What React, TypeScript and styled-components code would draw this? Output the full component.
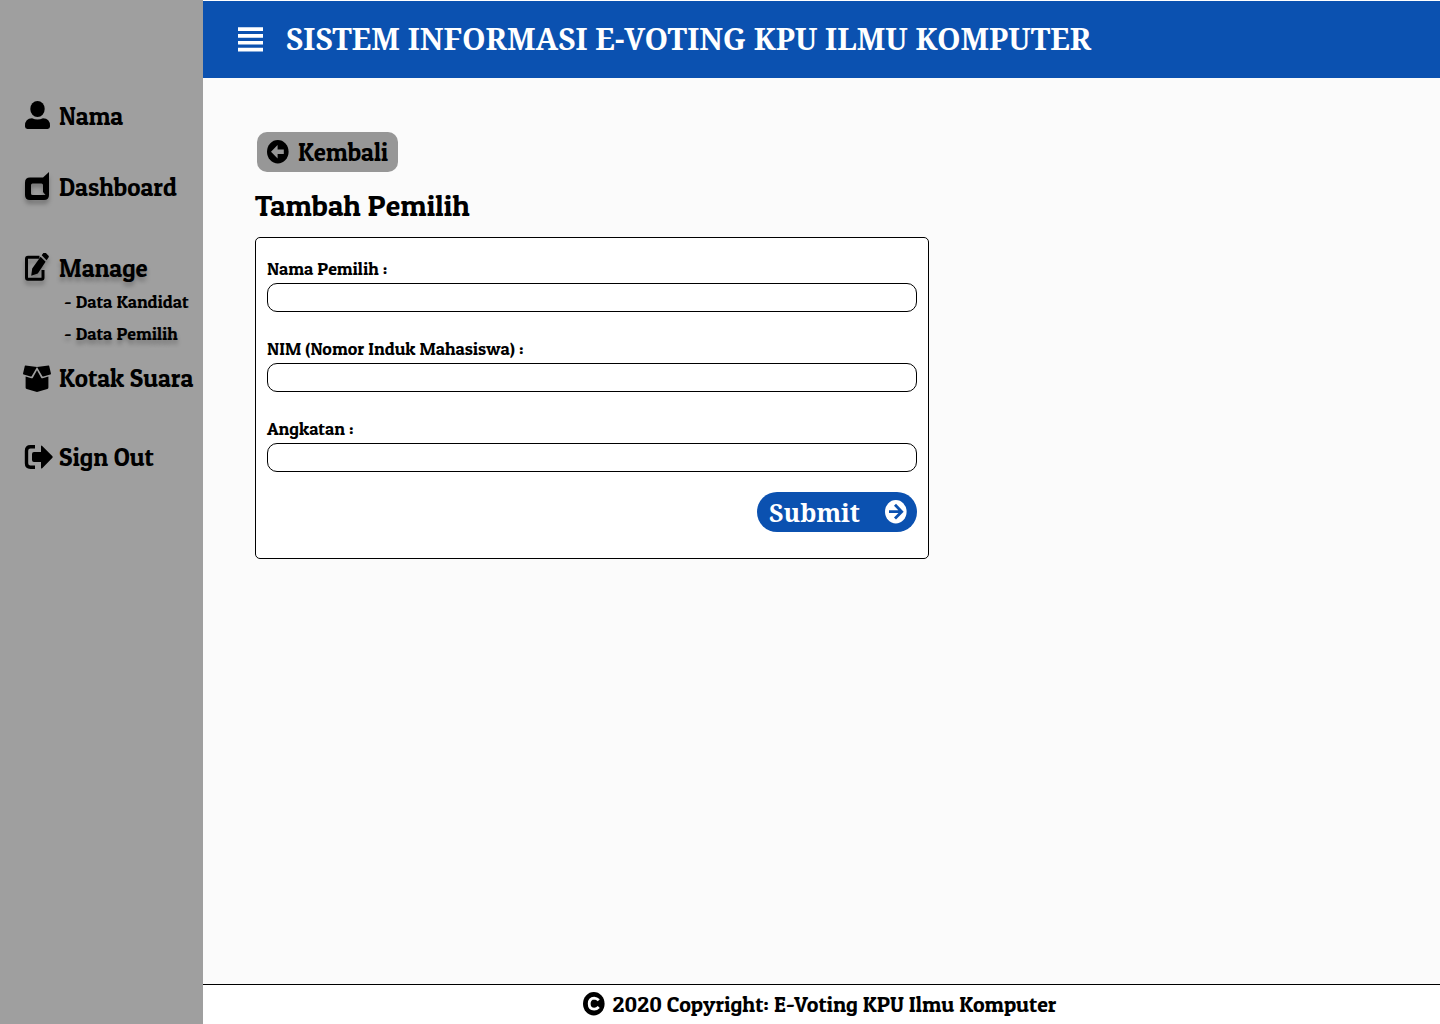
import React from "react";
import styled, { createGlobalStyle } from "styled-components";

const slab = '"Patua One", "DejaVu Serif Condensed", "DejaVu Serif", serif';
const serif = '"Noto Serif", "Droid Serif", "DejaVu Serif", serif';
const blue = "#0b51b0";

const GlobalStyle = createGlobalStyle`
  *, *::before, *::after { box-sizing: border-box; }
  body { margin: 0; background: #fbfbfb; color: #000; font-family: ${slab}; }
  h1, h2, ul { margin: 0; padding: 0; }
  ul { list-style: none; }
  svg { display: block; flex: none; }
`;

const Page = styled.div`
  display: grid;
  grid-template-columns: 203px minmax(0, 1fr);
  min-height: 100vh;
`;

const Sidebar = styled.nav`
  background: #9f9f9f;
  padding: 98px 0 32px 23px;
`;

const NavItem = styled.li<{ $gap: number }>`
  margin-top: ${(p) => p.$gap}px;
`;

const NavLink = styled.a<{ $shadow?: boolean; $iconShadow?: boolean }>`
  display: grid;
  grid-template-columns: 28px 1fr;
  align-items: center;
  column-gap: 8px;
  height: 36px;
  color: inherit;
  font-size: 25px;
  text-decoration: none;
  white-space: nowrap;
  text-shadow: ${(p) => (p.$shadow ? "0 4px 4px rgba(0, 0, 0, 0.25)" : "none")};

  svg {
    filter: ${(p) => (p.$iconShadow ? "drop-shadow(0 4px 2px rgba(0, 0, 0, 0.25))" : "none")};
  }
`;

const SubLink = styled.a<{ $shadow?: boolean }>`
  display: block;
  padding-left: 41px;
  color: inherit;
  font-size: 18px;
  line-height: 32px;
  text-decoration: none;
  white-space: nowrap;
  text-shadow: ${(p) => (p.$shadow ? "0 4px 4px rgba(0, 0, 0, 0.25)" : "none")};
`;

const Column = styled.div`
  display: flex;
  flex-direction: column;
`;

const Header = styled.header`
  display: flex;
  align-items: center;
  gap: 23px;
  min-height: 78px;
  padding: 0 35px;
  border-top: 1px solid #fff;
  background: ${blue};
  color: #fff;
`;

const MenuButton = styled.button`
  padding: 0;
  border: 0;
  background: none;
  color: inherit;
  cursor: pointer;
`;

const SiteTitle = styled.h1`
  padding-bottom: 2px;
  font-family: ${serif};
  font-size: 30px;
  font-weight: 700;
  line-height: 40px;
`;

const Content = styled.main`
  display: flex;
  flex: 1;
  flex-direction: column;
  align-items: flex-start;
  padding: 54px 52px;
`;

const BackButton = styled.button`
  display: flex;
  align-items: center;
  gap: 9px;
  height: 40px;
  margin-left: 2px;
  padding: 0 10px;
  border: 0;
  border-radius: 10px;
  background: #979797;
  color: #000;
  font-family: ${slab};
  font-size: 25px;
  cursor: pointer;
`;

const Heading = styled.h2`
  margin: 13px 0 12px;
  font-size: 30px;
  font-weight: 400;
  line-height: 40px;
`;

const Card = styled.form`
  display: flex;
  flex-direction: column;
  gap: 23px;
  width: 100%;
  max-width: 674px;
  padding: 17px 11px 26px;
  border: 1px solid #000;
  border-radius: 5px;
  background: #fff;
`;

const Field = styled.div`
  display: flex;
  flex-direction: column;
`;

const Label = styled.label`
  font-size: 18px;
  line-height: 28px;
`;

const Input = styled.input`
  width: 100%;
  height: 29px;
  padding: 0 10px;
  border: 1px solid #000;
  border-radius: 10px;
  background: #fff;
  font-family: ${slab};
  font-size: 18px;
`;

const SubmitButton = styled.button`
  display: flex;
  align-items: center;
  align-self: flex-end;
  justify-content: space-between;
  width: 160px;
  height: 40px;
  margin-top: -3px;
  padding: 0 10px 0 12px;
  border: 0;
  border-radius: 20px;
  background: ${blue};
  color: #fff;
  font-family: ${serif};
  font-size: 25px;
  font-weight: 700;
  cursor: pointer;
`;

const Footer = styled.footer`
  display: flex;
  align-items: center;
  justify-content: center;
  gap: 8px;
  min-height: 40px;
  padding: 0 4px 1px 0;
  border-top: 1px solid #000;
  background: #fff;
  font-size: 22px;
`;

const UserIcon = () => (
  <svg width="28" height="30" viewBox="0 0 28 30" fill="currentColor" aria-hidden="true">
    <ellipse cx="14.5" cy="8" rx="7.2" ry="8" />
    <path d="M9 17.200q5.500 2.400 11 0q7 .4 7 7.400v1q0 2.400-2.400 2.400H4.400Q2 28 2 25.600v-1q0-7 7-7.400z" />
  </svg>
);

const DashboardIcon = () => (
  <svg width="28" height="30" viewBox="0 0 28 30" fill="currentColor" fillRule="evenodd" aria-hidden="true">
    <path d="M26 0v23q0 5-5 5H7q-5 0-5-5V10.500q0-5 5-5h13zM9.500 11.500q-1.500 0-1.500 1.500v8.500q0 1.500 1.500 1.500h13l-2.500-3v-7q0-1.500-1.500-1.500z" />
  </svg>
);

const EditIcon = () => (
  <svg width="28" height="30" viewBox="0 0 28 30" aria-hidden="true">
    <path d="M16.500 4.200H5q-1.500 0-1.500 1.500v19q0 1.500 1.500 1.500h13.500q1.500 0 1.500-1.500V17" fill="none" stroke="currentColor" strokeWidth="3" />
    <path d="M17.600 3.700l5 5L14.800 20.500 8.200 22.800 9.200 15.600zM18.700 2.200L20.500-.200q1-1 2.200 0l2.600 2.600q1 1 .2 2.200L23.600 7.200z" fill="currentColor" />
  </svg>
);

const BoxIcon = () => (
  <svg width="28" height="30" viewBox="0 0 28 30" fill="currentColor" aria-hidden="true">
    <path d="M2.400 2.500L14 4 8.800 12.900q-.4.700-1.200.5L.7 11.500q-.9-.3-.6-1.200L1.800 3.100Q1.900 2.400 2.400 2.500zM25.600 2.500L14 4l5.200 8.900q.4.700 1.200.5l6.900-1.900q.9-.3.600-1.200l-1.700-7.200q-.1-.7-.6-.6z" />
    <path d="M2.600 13.500l5.700 1.700q1.100.3 1.700-.8L14 7.300l4 7.100q.6 1.100 1.700.8l5.700-1.700v11q0 1.200-1.100 1.500L14 29l-10.300-3Q2.600 25.700 2.600 24.500z" />
  </svg>
);

const SignOutIcon = () => (
  <svg width="30" height="24" viewBox="0 0 30 24" aria-hidden="true">
    <path d="M12 1.700H7.500q-4 0-4 4v12.600q0 4 4 4H12" fill="none" stroke="currentColor" strokeWidth="3.400" />
    <path d="M18 1.500q0-1.500 1.200-.5l10 10q1 1 0 2l-10 10.200q-1.200 1-1.200-.6V17h-7q-2 0-2-2V9q0-2 2-2h7z" fill="currentColor" />
  </svg>
);

const MenuIcon = () => (
  <svg width="25" height="26" viewBox="0 0 25 26" fill="currentColor" aria-hidden="true">
    <path d="M0 .3h25v3.700H0zM0 7.100h25v3.700H0zM0 13.900h25v3.700H0zM0 20.700h25v3.700H0z" />
  </svg>
);

const BackIcon = () => (
  <svg width="22" height="24" viewBox="0 0 22 24" aria-hidden="true">
    <ellipse cx="10.800" cy="11.700" rx="10.800" ry="11.700" fill="currentColor" />
    <path d="M4 11.700L10.600 5v4.500h6.200v4.400h-6.200v4.500z" fill="#979797" />
  </svg>
);

const SubmitIcon = () => (
  <svg width="22" height="24" viewBox="0 0 22 24" aria-hidden="true">
    <ellipse cx="10.800" cy="11.700" rx="10.800" ry="11.700" fill="currentColor" />
    <path d="M4 11.700h12.500M10 4.800L16.700 11.700 10 18.600" fill="none" stroke={blue} strokeWidth="2.800" />
  </svg>
);

const CopyrightIcon = () => (
  <svg width="22" height="24" viewBox="0 0 22 24" aria-hidden="true">
    <ellipse cx="10.800" cy="11.700" rx="10.800" ry="11.700" fill="currentColor" />
    <path d="M15.800 8.300Q13.700 6.200 11.200 6.200q-5 .3-5 5.500t5 5.500q2.500 0 4.600-2.100" fill="none" stroke="#fff" strokeWidth="2.800" />
  </svg>
);

const fields = [
  { id: "nama", label: "Nama Pemilih :" },
  { id: "nim", label: "NIM (Nomor Induk Mahasiswa) :" },
  { id: "angkatan", label: "Angkatan :" },
];

export default function App() {
  return (
    <>
      <GlobalStyle />
      <Page>
        <Sidebar aria-label="Menu">
          <ul>
            <NavItem $gap={0}>
              <NavLink href="#nama"><UserIcon />Nama</NavLink>
            </NavItem>
            <NavItem $gap={35}>
              <NavLink href="#dashboard" $iconShadow><DashboardIcon />Dashboard</NavLink>
            </NavItem>
            <NavItem $gap={45}>
              <NavLink href="#manage" $shadow $iconShadow><EditIcon />Manage</NavLink>
              <ul>
                <li><SubLink href="#kandidat">- Data Kandidat</SubLink></li>
                <li><SubLink href="#pemilih" $shadow>- Data Pemilih</SubLink></li>
              </ul>
            </NavItem>
            <NavItem $gap={10}>
              <NavLink href="#kotak-suara"><BoxIcon />Kotak Suara</NavLink>
            </NavItem>
            <NavItem $gap={43}>
              <NavLink href="#sign-out"><SignOutIcon />Sign Out</NavLink>
            </NavItem>
          </ul>
        </Sidebar>
        <Column>
          <Header>
            <MenuButton type="button" aria-label="Menu"><MenuIcon /></MenuButton>
            <SiteTitle>SISTEM INFORMASI E-VOTING KPU ILMU KOMPUTER</SiteTitle>
          </Header>
          <Content>
            <BackButton type="button"><BackIcon />Kembali</BackButton>
            <Heading>Tambah Pemilih</Heading>
            <Card onSubmit={(e) => e.preventDefault()}>
              {fields.map((f) => (
                <Field key={f.id}>
                  <Label htmlFor={f.id}>{f.label}</Label>
                  <Input id={f.id} name={f.id} type="text" />
                </Field>
              ))}
              <SubmitButton type="submit">Submit<SubmitIcon /></SubmitButton>
            </Card>
          </Content>
          <Footer><CopyrightIcon />2020 Copyright: E-Voting KPU Ilmu Komputer</Footer>
        </Column>
      </Page>
    </>
  );
}
